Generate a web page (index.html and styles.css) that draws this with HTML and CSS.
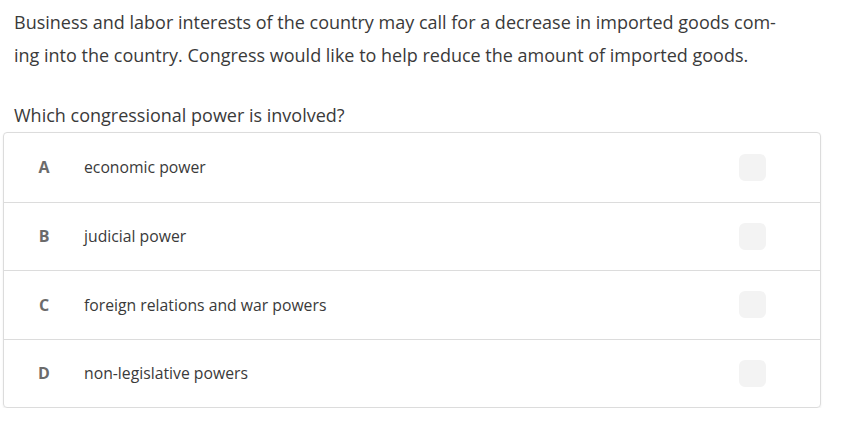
FILE: index.html
```html
<!DOCTYPE html>
<html>
<head>
<meta charset="utf-8">
<link rel="stylesheet" href="styles.css">
</head>
<body>
<div class="question">
  <p class="stem">Business and labor interests of the country may call for a decrease in imported goods com-<br>ing into the country. Congress would like to help reduce the amount of imported goods.</p>
  <p class="prompt">Which congressional power is involved?</p>
  <div class="choices">
    <div class="choice"><span class="letter">A</span><span class="label">economic power</span><span class="box"></span></div>
    <div class="choice"><span class="letter">B</span><span class="label">judicial power</span><span class="box"></span></div>
    <div class="choice"><span class="letter">C</span><span class="label">foreign relations and war powers</span><span class="box"></span></div>
    <div class="choice"><span class="letter">D</span><span class="label">non-legislative powers</span><span class="box"></span></div>
  </div>
</div>
</body>
</html>
```
FILE: styles.css
```css
html, body {
  margin: 0;
  padding: 0;
  background: #fff;
}
body {
  font-family: "Open Sans", "Liberation Sans", sans-serif;
  color: #333;
}
.question {
  padding: 6px 20px 0 3px;
}
.stem {
  margin: 0 0 0 11px;
  font-size: 18px;
  line-height: 33px;
  color: #3a3a3a;
}
.prompt {
  margin: 27px 0 0 11px;
  font-size: 18px;
  line-height: 33px;
  color: #3a3a3a;
}
.choices {
  border: 1px solid #dcdcdc;
  border-radius: 4px;
  box-shadow: 0 1px 2px rgba(0,0,0,0.08);
}
.choice {
  display: flex;
  align-items: center;
  height: 68.5px;
  box-sizing: border-box;
  border-top: 1px solid #dcdcdc;
}
.choice:first-child {
  border-top: none;
}
.letter {
  width: 80px;
  text-align: center;
  font-weight: 700;
  font-size: 16px;
  color: #6b6b6b;
}
.label {
  flex: 1;
  font-size: 15.75px;
  color: #3a3a3a;
}
.box {
  width: 27px;
  height: 27px;
  border-radius: 6px;
  background: #f3f3f3;
  margin-right: 54px;
}
```
